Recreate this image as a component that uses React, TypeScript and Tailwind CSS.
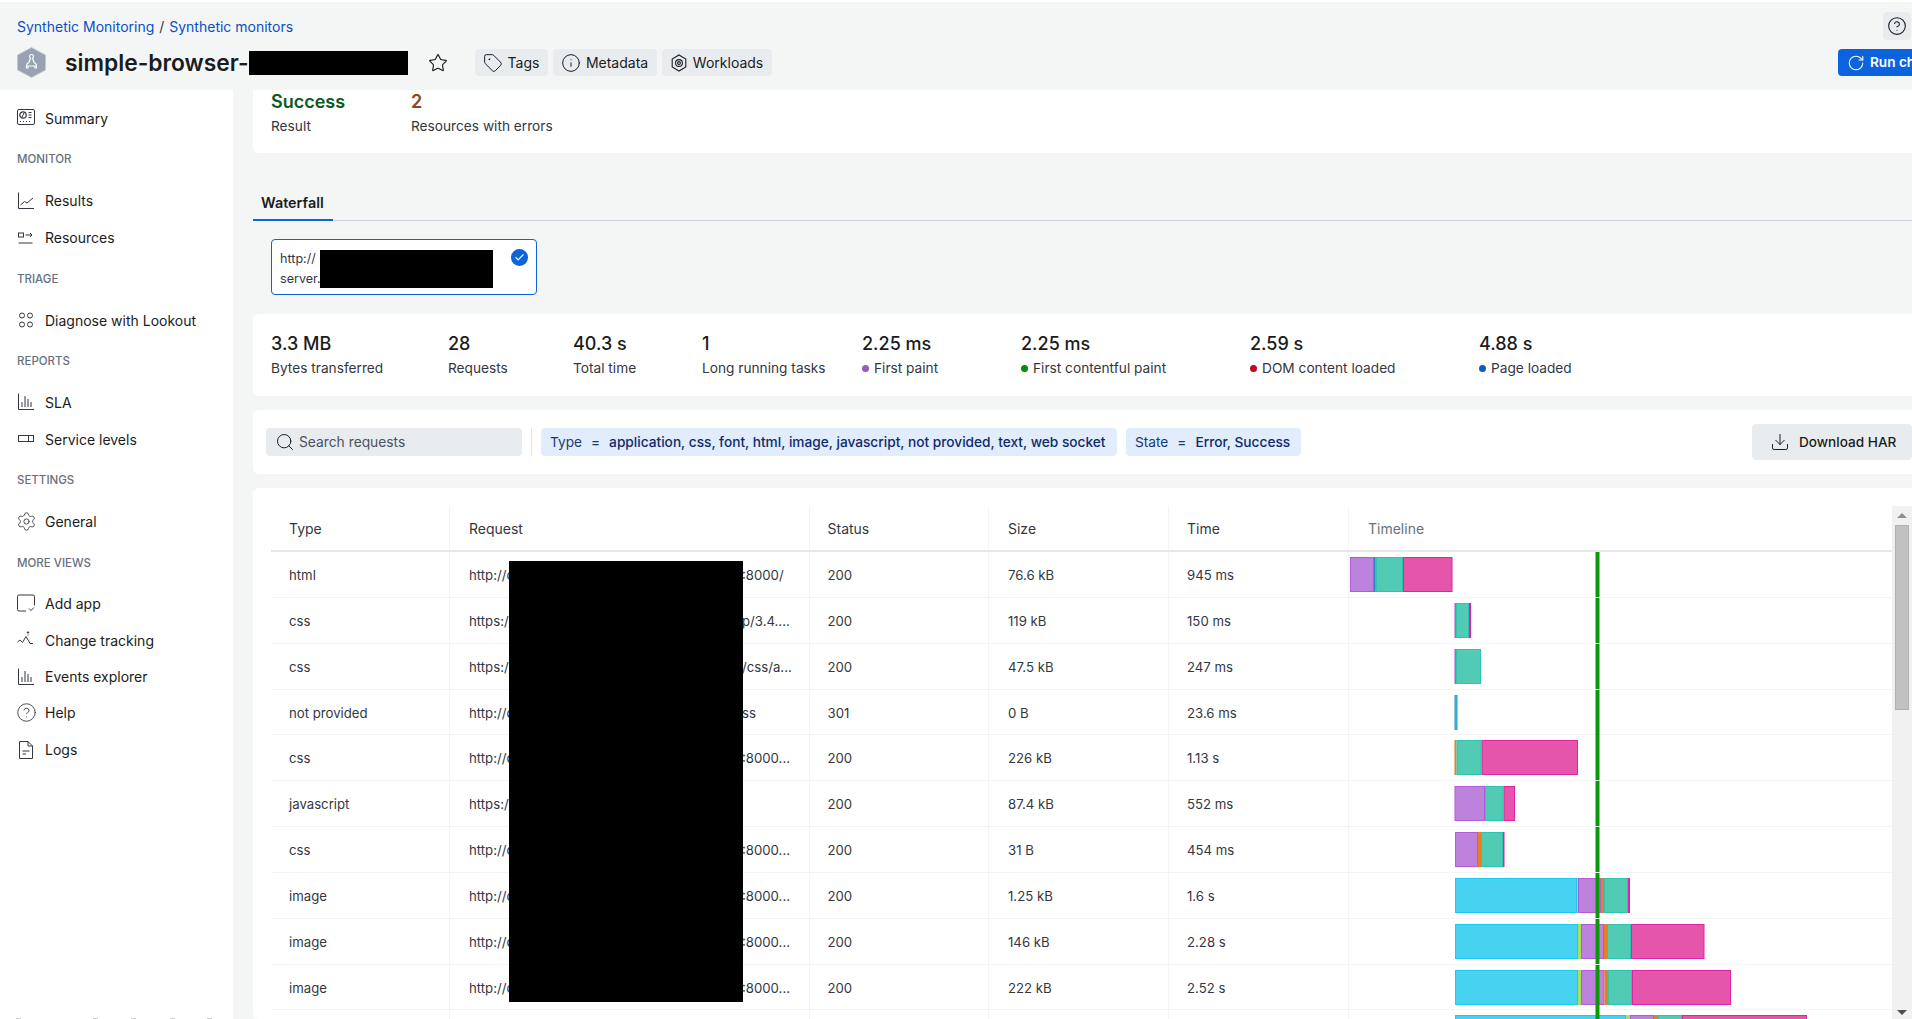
import React from "react";
import { Star, Tag, Info, CircleHelp, Settings, Search, Download, RotateCw, Check } from "lucide-react";

const C = { bl: ["#48d2f2", "#1ccbf2"], li: ["#a8e063", "#a8e063"], pu: ["#bd82db", "#b25bd8"], or: ["#e67e22", "#e67e22"], te: ["#52cbb5", "#2cc6ae"], pi: ["#e455ab", "#e322a3"], sb: ["#2f80c8", "#2f80c8"], cy: ["#35bccb", "#2f9fd0"] } as const;
type K = keyof typeof C;
type Seg = [K, number, number];

const rows: { type: string; req: string; tail: string; status: string; size: string; time: string; segs: Seg[] }[] = [
  { type: "html", req: "http://c", tail: ":8000/", status: "200", size: "76.6 kB", time: "945 ms", segs: [["pu", 1351, 1375], ["sb", 1375, 1376], ["or", 1376, 1377], ["te", 1377, 1404], ["pi", 1404, 1453.5]] },
  { type: "css", req: "https://", tail: "p/3.4....", status: "200", size: "119 kB", time: "150 ms", segs: [["pu", 1455.5, 1457], ["te", 1457, 1470], ["pi", 1470, 1472]] },
  { type: "css", req: "https://", tail: "/css/a...", status: "200", size: "47.5 kB", time: "247 ms", segs: [["pu", 1455.5, 1457], ["te", 1457, 1482]] },
  { type: "not provided", req: "http://c", tail: "ss", status: "301", size: "0 B", time: "23.6 ms", segs: [["cy", 1455.5, 1458.5]] },
  { type: "css", req: "http://c", tail: ":8000...", status: "200", size: "226 kB", time: "1.13 s", segs: [["or", 1455.5, 1457.5], ["te", 1457.5, 1482.5], ["pi", 1482.5, 1579]] },
  { type: "javascript", req: "https://", tail: "", status: "200", size: "87.4 kB", time: "552 ms", segs: [["pu", 1455.5, 1486], ["te", 1486, 1504.5], ["pi", 1504.5, 1516]] },
  { type: "css", req: "http://c", tail: ":8000...", status: "200", size: "31 B", time: "454 ms", segs: [["pu", 1456, 1479], ["or", 1479, 1482], ["te", 1482, 1504], ["pi", 1504, 1505.5]] },
  { type: "image", req: "http://c", tail: ":8000...", status: "200", size: "1.25 kB", time: "1.6 s", segs: [["bl", 1456, 1578], ["li", 1578, 1579], ["pu", 1579, 1602], ["or", 1602, 1605], ["te", 1605, 1629], ["pi", 1629, 1631]] },
  { type: "image", req: "http://c", tail: ":8000...", status: "200", size: "146 kB", time: "2.28 s", segs: [["bl", 1456, 1579], ["li", 1579, 1582], ["pu", 1582, 1605], ["or", 1605, 1608], ["te", 1608, 1632], ["pi", 1632, 1705.5]] },
  { type: "image", req: "http://c", tail: ":8000...", status: "200", size: "222 kB", time: "2.52 s", segs: [["bl", 1456, 1579], ["li", 1579, 1582], ["pu", 1582, 1605.5], ["or", 1605.5, 1609], ["te", 1609, 1633], ["pi", 1633, 1732]] },
  { type: "", req: "", tail: "", status: "", size: "", time: "", segs: [["bl", 1456, 1627], ["li", 1627, 1631], ["pu", 1631, 1655], ["or", 1655, 1659], ["te", 1659, 1683], ["pi", 1683, 1808]] },
];

const Svg = ({ children, size = 18 }: { children: React.ReactNode; size?: number }) => (
  <svg width={size} height={size} viewBox="0 0 18 18" fill="none" stroke="#343741" strokeWidth="1" className="shrink-0">{children}</svg>
);

const IconSummary = () => (
  <Svg><rect x="0.5" y="0.5" width="17" height="15" rx="1.5" /><circle cx="6" cy="6" r="3.2" strokeWidth="1.2" /><path d="M5 8l2-4M11.5 3.5h3M11.5 6h3M11.5 8.5h3" /><path d="M3 12.5h1M6 12.5h1M9 12.5h1M12 12.5h1" /></Svg>
);
const IconResults = () => (
  <Svg><path d="M1.5 .5v16h15.5" /><path d="M3.5 13l4-3.5 2.5 1.5 6-5" /></Svg>
);
const IconResources = () => (
  <Svg><rect x="1.5" y="4" width="5" height="4" /><path d="M8.5 6h6.5M13 4l2 2-2 2M1.5 14h14" /></Svg>
);
const IconLookout = () => (
  <Svg><circle cx="5" cy="4.5" r="2.5" /><circle cx="13" cy="4.5" r="2.5" /><circle cx="5" cy="13.5" r="2.5" /><circle cx="13" cy="13.5" r="2.5" /></Svg>
);
const IconBars = () => (
  <Svg><path d="M1.5 .5v16h15.5" /><path d="M5 14V9M8 14V3M11 14V6M14 14V9" /></Svg>
);
const IconLevels = () => (
  <Svg><rect x="1.5" y="5.5" width="15" height="6" /><path d="M11.5 5.5v6" /></Svg>
);
const IconAddApp = () => (
  <Svg><path d="M9 17H2a1.5 1.5 0 0 1-1.5-1.5v-13A1.5 1.5 0 0 1 2 1h14a1.5 1.5 0 0 1 1.5 1.5v9" /><path d="M7 7h.01M10 7h.01M7 10.5h.01M10 10.5h.01" strokeWidth="1.4" /><path d="M12 14.5l2 2 3-3" /></Svg>
);
const IconChange = () => (
  <Svg><path d="M.5 11l2.5-2 2.5 2.5 3.5-6 3 5 1 2h3" /><circle cx="11" cy="1.5" r=".7" fill="#343741" /><path d="M11 3.5v1M8 14h.01M11 14h.01" /></Svg>
);
const IconLogs = () => (
  <Svg><path d="M2.5 .5h8.5l4.5 4.5v12.5h-13z" /><path d="M11 .5v4.5h4.5M5.5 10h7M5.5 13h3.5" /></Svg>
);
const IconWorkloads = () => (
  <svg width="18" height="18" viewBox="0 0 18 18" fill="none" stroke="#1a1c21" strokeWidth="1.1" className="shrink-0"><path d="M9 1l6.8 4v8L9 17l-6.8-4V5z" /><circle cx="9" cy="9" r="3.4" /><circle cx="9" cy="9" r="1.4" /></svg>
);
const HexLogo = () => (
  <svg width="29" height="31" viewBox="0 0 29 31" className="shrink-0"><path d="M14.5 0.5L28.5 8v15l-14 7.5L.5 23V8z" fill="#98a2b3" stroke="#c4c9d0" /><path d="M14.5 7.5a2 2 0 0 1 2 2c0 .7-.4 1.3-1 1.7l1.6 4.3c1.4.6 2.4 2 2.4 3.5v2h-1.5v-2h-7v2H9.5v-2c0-1.5 1-2.9 2.4-3.5l1.6-4.3c-.6-.4-1-1-1-1.7a2 2 0 0 1 2-2z" fill="none" stroke="#fff" strokeWidth="1.2" /></svg>
);

const Item = ({ y, icon, label }: { y: string; icon: React.ReactNode; label: string }) => (
  <div className={`flex items-center gap-[10px] pl-[17px] h-[21px] ${y}`}>
    <span className="w-[18px] h-[18px] flex items-center justify-center shrink-0">{icon}</span>
    <span className="text-[14px] leading-[21px] text-[#1a1c21]">{label}</span>
  </div>
);
const Group = ({ label, mt }: { label: string; mt: string }) => (
  <div className={`pl-[17px] text-[11.5px] font-medium leading-[16px] text-[#69707d] ${mt}`}>{label}</div>
);

const Stat = ({ value, label, dot, w }: { value: string; label: string; dot?: string; w: string }) => (
  <div className={`${w} shrink-0`}>
    <div className="text-[18px] font-medium leading-[24px] text-[#1a1c21]">{value}</div>
    <div className="mt-[2px] text-[13.7px] leading-[20px] text-[#343741] flex items-center gap-[5px]">
      {dot && <span className={`w-[7px] h-[7px] rounded-full ${dot}`} />}
      {label}
    </div>
  </div>
);

const Pill = ({ k, v, w }: { k: string; v: string; w: string }) => (
  <div className={`${w} h-[28px] shrink-0 rounded-[4px] bg-[#e1ecfd] flex items-center px-[9px] text-[13.7px] whitespace-nowrap`}>
    <span className="text-[#1a3a6e]">{k}</span>
    <span className="mx-[9px] text-[#1a3a6e]">=</span>
    <span className="font-medium text-[#0f2a6b]">{v}</span>
  </div>
);

const HeadBtn = ({ icon, label, w }: { icon: React.ReactNode; label: string; w: string }) => (
  <div className={`${w} h-[27px] rounded-[4px] bg-[#e9ecef] flex items-center justify-center gap-[5px] text-[14px] text-[#1a1c21]`}>
    {icon}{label}
  </div>
);

const Timeline = ({ segs }: { segs: Seg[] }) => (
  <svg width="543" height="46" viewBox="0 0 543 46" className="block">
    {segs.map(([k, a, b], i) => (
      <rect key={i} x={a - 1350 + 0.5} y="5.5" width={Math.max(b - a - 1, 0.5)} height="34" fill={C[k][0]} stroke={C[k][1]} strokeWidth="1" />
    ))}
    <rect x="246.5" y="0" width="4" height="45" fill="#0a980a" />
  </svg>
);

const cell = "shrink-0 h-full flex items-center border-r border-[#f3f4f5] text-[14px] text-[#343741] whitespace-nowrap overflow-hidden";
const rowCell = "shrink-0 h-full flex items-center pt-[3px] border-r border-[#f3f4f5] text-[13.2px] text-[#343741] whitespace-nowrap overflow-hidden";

export default function App() {
  return (
    <div className="w-[1912px] h-[1019px] overflow-hidden bg-[#f4f6f6] font-['Inter','Liberation_Sans',sans-serif] relative">
      <div className="h-[2px] bg-white" />
      <header className="h-[88px] flex">
        <div className="flex-1 min-w-0 pl-[17px] pt-[16px]">
          <div className="text-[14px] leading-[18px] text-[#0a4fc4]">Synthetic Monitoring<span className="mx-[1px] text-[#343741]"> / </span>Synthetic monitors</div>
          <div className="mt-[11px] flex items-center h-[31px]">
            <HexLogo />
            <div className="ml-[19px] text-[22.8px] font-semibold leading-[32px] text-[#1a1c21] whitespace-nowrap">simple-browser-</div>
            <div className="w-[159px] h-[24px] bg-black shrink-0" />
            <Star size={20} strokeWidth={1.4} className="ml-[20px] text-[#1a1c21] shrink-0" />
            <div className="ml-[27px] flex gap-[5px]">
              <HeadBtn icon={<Tag size={20} strokeWidth={1.2} />} label="Tags" w="w-[73px]" />
              <HeadBtn icon={<Info size={20} strokeWidth={1.2} />} label="Metadata" w="w-[104px]" />
              <HeadBtn icon={<IconWorkloads />} label="Workloads" w="w-[110px]" />
            </div>
          </div>
        </div>
        <div className="w-[74px] shrink-0 pt-[10px]">
          <div className="ml-[45px] w-[28px] h-[28px] rounded-[4px] bg-[#e9ecef] flex items-center justify-center"><CircleHelp size={20} strokeWidth={1.3} className="text-[#1a1c21]" /></div>
          <div className="mt-[9px] w-[120px] h-[27px] rounded-[4px] bg-[#0b64dd] flex items-center pl-[9px] gap-[5px] text-[13.6px] font-semibold text-white whitespace-nowrap">
            <RotateCw size={18} strokeWidth={1.4} />Run check
          </div>
        </div>
      </header>

      <div className="flex h-[929px]">
        <aside className="w-[233px] shrink-0 bg-white pt-[17.5px] overflow-hidden flex flex-col">
          <Item y="" icon={<IconSummary />} label="Summary" />
          <Group label="MONITOR" mt="mt-[22.5px]" />
          <Item y="mt-[23px]" icon={<IconResults />} label="Results" />
          <Item y="mt-[16px]" icon={<IconResources />} label="Resources" />
          <Group label="TRIAGE" mt="mt-[23px]" />
          <Item y="mt-[22.5px]" icon={<IconLookout />} label="Diagnose with Lookout" />
          <Group label="REPORTS" mt="mt-[22.5px]" />
          <Item y="mt-[22.5px]" icon={<IconBars />} label="SLA" />
          <Item y="mt-[16px]" icon={<IconLevels />} label="Service levels" />
          <Group label="SETTINGS" mt="mt-[22.5px]" />
          <Item y="mt-[23px]" icon={<Settings size={21} strokeWidth={1} className="text-[#343741] shrink-0" />} label="General" />
          <Group label="MORE VIEWS" mt="mt-[22.5px]" />
          <Item y="mt-[22px]" icon={<IconAddApp />} label="Add app" />
          <Item y="mt-[16px]" icon={<IconChange />} label="Change tracking" />
          <Item y="mt-[15.5px]" icon={<IconBars />} label="Events explorer" />
          <Item y="mt-[15px]" icon={<CircleHelp size={21} strokeWidth={1} className="text-[#343741] shrink-0" />} label="Help" />
          <Item y="mt-[16px]" icon={<IconLogs />} label="Logs" />
          <div className="mt-auto h-[1px] flex">
            <span className="ml-[16px] w-[5px] bg-[#c8cbd0]" />
            <span className="ml-[72px] w-[5px] bg-[#c8cbd0]" />
            <span className="ml-[33px] w-[5px] bg-[#c8cbd0]" />
            <span className="ml-[34px] w-[5px] bg-[#c8cbd0]" />
            <span className="ml-[32px] w-[5px] bg-[#c8cbd0]" />
          </div>
        </aside>

        <main className="flex-1 min-w-0 pl-[20px]">
          <section className="h-[63px] bg-white rounded-bl-[6px] pl-[18px] flex">
            <div className="w-[140px]">
              <div className="text-[18px] font-semibold leading-[24px] text-[#0b5a1e]">Success</div>
              <div className="mt-[2px] text-[13.7px] leading-[20px] text-[#343741]">Result</div>
            </div>
            <div>
              <div className="text-[18px] font-semibold leading-[24px] text-[#8a4a10]">2</div>
              <div className="mt-[2px] text-[13.7px] leading-[20px] text-[#343741]">Resources with errors</div>
            </div>
          </section>

          <div className="mt-[33px] h-[35px] border-b border-[#cdd3da] flex">
            <div className="w-[80px] h-[35px] border-b-2 border-[#0b64dd] pl-[8px] text-[14.4px] font-semibold leading-[34px] text-[#1a1c21]">Waterfall</div>
          </div>

          <div className="ml-[18px] mt-[18px] w-[266px] h-[56px] rounded-[4px] border border-[#0b64dd] bg-white pl-[8px] pt-[9px] flex">
            <div className="text-[12.6px] leading-[20px] text-[#343741] w-[40px] shrink-0">
              <div>http://</div><div>server.</div>
            </div>
            <div className="w-[173px] h-[38px] bg-black mt-[1px]" />
            <div className="ml-[18px] w-[17px] h-[17px] rounded-full bg-[#0b64dd] flex items-center justify-center shrink-0"><Check size={11} strokeWidth={2.5} className="text-white" /></div>
          </div>

          <section className="mt-[19px] h-[82px] bg-white rounded-l-[6px] pl-[18px] pt-[18px] flex">
            <Stat value="3.3 MB" label="Bytes transferred" w="w-[177px]" />
            <Stat value="28" label="Requests" w="w-[125px]" />
            <Stat value="40.3 s" label="Total time" w="w-[129px]" />
            <Stat value="1" label="Long running tasks" w="w-[160px]" />
            <Stat value="2.25 ms" label="First paint" dot="bg-[#9b59b6]" w="w-[159px]" />
            <Stat value="2.25 ms" label="First contentful paint" dot="bg-[#0a8a0a]" w="w-[229px]" />
            <Stat value="2.59 s" label="DOM content loaded" dot="bg-[#bd0a1e]" w="w-[229px]" />
            <Stat value="4.88 s" label="Page loaded" dot="bg-[#0b5bc4]" w="w-[150px]" />
          </section>

          <section className="mt-[14px] h-[64px] bg-white rounded-l-[6px] pl-[13px] flex items-center">
            <div className="w-[256px] h-[28px] shrink-0 rounded-[4px] bg-[#e9ecef] flex items-center pl-[9px] gap-[4px] text-[13.8px] text-[#4a5260]">
              <Search size={20} strokeWidth={1.2} className="text-[#1a1c21]" />Search requests
            </div>
            <div className="mx-[9px] w-px h-[28px] bg-[#e3e6ea]" />
            <Pill k="Type" v="application, css, font, html, image, javascript, not provided, text, web socket" w="w-[576px]" />
            <div className="w-[9px] shrink-0" />
            <Pill k="State" v="Error, Success" w="w-[175px]" />
            <div className="flex-1" />
            <div className="w-[160px] h-[36px] shrink-0 rounded-[4px] bg-[#e9ecef] flex items-center pl-[18px] gap-[9px] text-[13.6px] font-medium text-[#1a1c21] whitespace-nowrap">
              <Download size={20} strokeWidth={1.2} />Download HAR
            </div>
          </section>

          <section className="mt-[14px] h-[531px] bg-white rounded-l-[6px] pl-[18px] pt-[18px] flex overflow-hidden">
            <div className="w-[1621px] shrink-0">
              <div className="h-[46px] flex border-b-2 border-[#e5e7eb]">
                {[["Type", "w-[179px]", "pl-[18px]"], ["Request", "w-[359.5px]", "pl-[19px]"], ["Status", "w-[179.5px]", "pl-[18px]"], ["Size", "w-[180px]", "pl-[19px]"], ["Time", "w-[180px]", "pl-[18px]"]].map(([t, w, p]) => (
                  <div key={t} className={`${cell} ${w} ${p} border-[#e9ebee]`}>{t}</div>
                ))}
                <div className="pl-[19px] flex items-center text-[14px] text-[#69707d]">Timeline</div>
              </div>
              <div className="relative">
                {rows.map((r, i) => (
                  <div key={i} className="h-[45.85px] flex border-b border-[#f3f4f5]">
                    <div className={`${rowCell} w-[179px] pl-[18px]`}>{r.type}</div>
                    <div className={`${rowCell} w-[359.5px] pl-[19px] relative`}>
                      {r.req}
                      <span className="absolute left-[292px]">{r.tail}</span>
                    </div>
                    <div className={`${rowCell} w-[179.5px] pl-[18px]`}>{r.status}</div>
                    <div className={`${rowCell} w-[180px] pl-[19px]`}>{r.size}</div>
                    <div className={`${rowCell} w-[180px] pl-[18px]`}>{r.time}</div>
                    <div className="w-[543px] shrink-0"><Timeline segs={r.segs} /></div>
                  </div>
                ))}
                <div className="absolute left-[238px] top-[9px] w-[234px] h-[441px] bg-black" />
              </div>
            </div>
            <div className="w-[20px] h-full shrink-0 bg-[#f1f1f1] flex flex-col items-center pt-[19px] relative">
              <div className="w-[14px] h-[185px] bg-[#c1c1c1] border border-[#b0b0b0]" />
              <div className="absolute bottom-[4px] w-0 h-0 border-x-[5px] border-x-transparent border-t-[5px] border-t-[#505050]" />
              <div className="absolute top-[7px] w-0 h-0 border-x-[5px] border-x-transparent border-b-[5px] border-b-[#8f8f8f]" />
            </div>
          </section>
        </main>
      </div>
    </div>
  );
}
